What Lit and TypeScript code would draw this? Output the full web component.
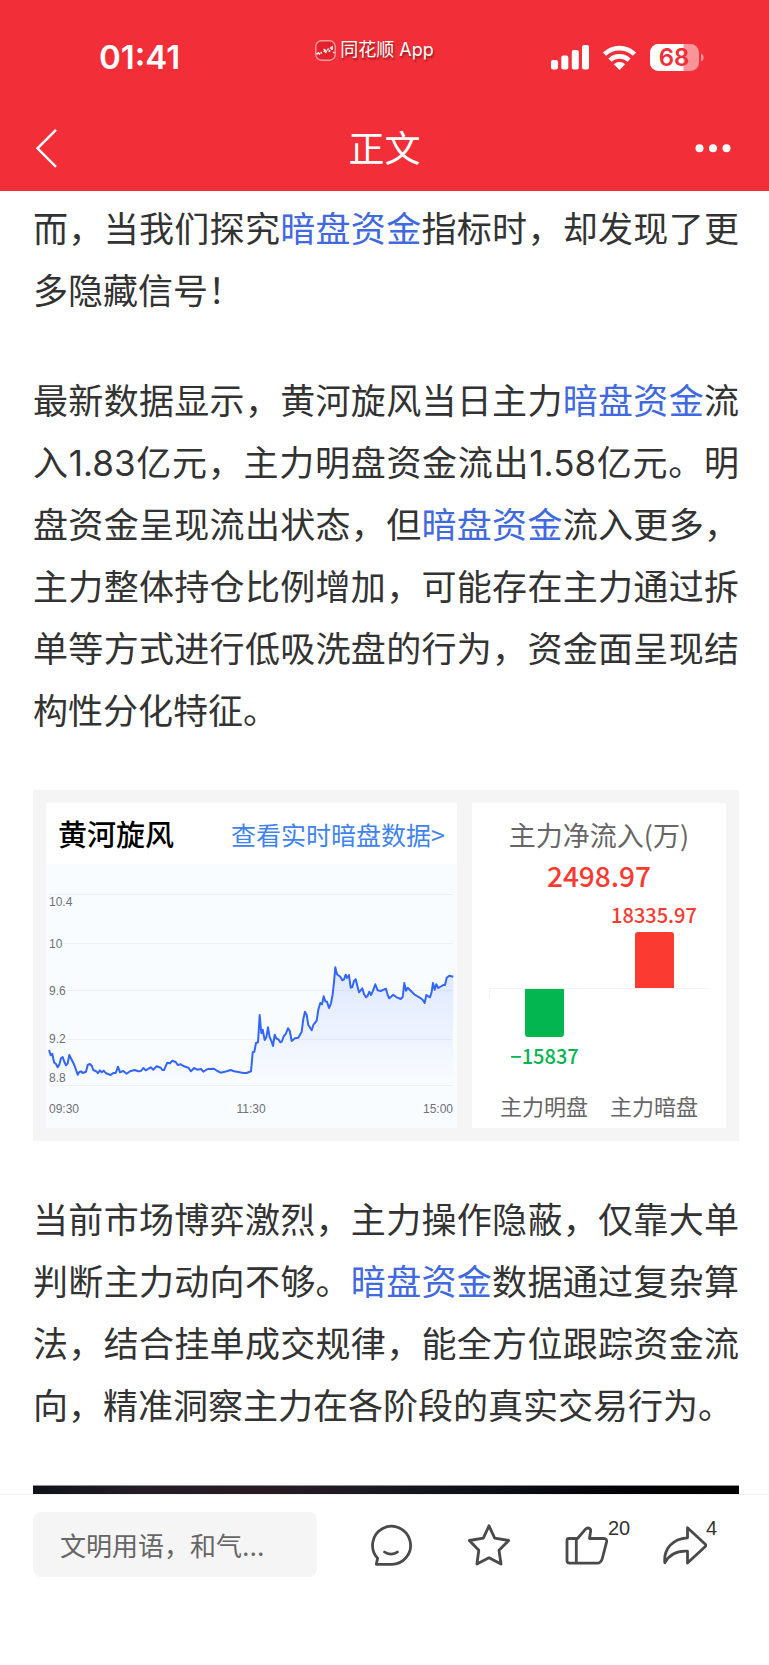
import { LitElement, html, svg, css } from "lit";
import { customElement } from "lit/decorators.js";

/* Intraday price trace, in thirds of a pixel from the plot's top-left corner. */
const TRACE: [number, number][] = [
  [9,558],[14,574],[19,569],[24,595],[30,600],[35,610],[40,602],[45,583],[50,579],[55,593],[60,604],[65,598],[70,573],
  [80,593],[85,603],[95,632],[100,624],[105,622],[110,627],[120,623],[125,603],[132,600],[137,605],[142,618],[152,623],
  [156,628],[162,619],[167,625],[173,620],[180,628],[194,633],[202,627],[209,627],[216,608],[222,625],[232,621],[242,629],
  [252,622],[266,618],[277,622],[285,621],[292,612],[299,619],[314,610],[322,617],[332,607],[344,611],[349,618],[354,618],
  [364,596],[372,598],[379,590],[389,594],[395,603],[404,601],[414,607],[427,611],[435,622],[444,612],[454,617],[465,615],
  [472,623],[485,615],[504,614],[514,621],[524,626],[542,622],[554,618],[564,622],[577,624],[592,627],[602,627],[615,622],
  [620,565],[625,563],[630,537],[636,535],[641,453],[646,507],[650,497],[656,528],[661,520],[666,490],[671,520],[676,530],
  [681,546],[686,512],[691,523],[698,527],[703,535],[708,532],[713,517],[719,510],[726,493],[731,500],[737,531],[747,523],
  [757,521],[767,503],[772,465],[777,443],[782,453],[787,483],[797,499],[802,483],[812,470],[817,437],[823,417],[828,421],
  [833,397],[838,412],[843,413],[849,432],[855,418],[860,390],[864,355],[868,310],[873,331],[883,338],[889,349],[894,346],
  [899,332],[903,342],[909,333],[914,371],[919,369],[924,351],[929,346],[934,365],[939,385],[949,373],[954,390],[960,400],
  [965,395],[970,383],[975,393],[980,382],[988,361],[995,379],[1004,381],[1020,374],[1025,393],[1030,403],[1042,392],
  [1052,400],[1064,405],[1070,399],[1075,357],[1080,380],[1085,371],[1105,391],[1120,400],[1130,407],[1136,417],[1141,393],
  [1152,400],[1157,383],[1161,357],[1166,377],[1171,361],[1177,372],[1192,363],[1197,363],[1202,341],[1210,335],[1222,338],
];

const LINE = "M" + TRACE.map(([x, y]) => `${(x / 3).toFixed(1)} ${(y / 3).toFixed(1)}`).join("L");
const AREA = `${LINE}L407 221L3 221Z`;

const GRID = [30, 79, 126, 175, 221];
const LEVELS = [
  { text: "10.4", y: 42 },
  { text: "10", y: 84 },
  { text: "9.6", y: 131 },
  { text: "9.2", y: 179 },
  { text: "8.8", y: 218 },
];

const FLOWS = [
  { name: "主力明盘", value: -15837, text: "−15837" },
  { name: "主力暗盘", value: 18335.97, text: "18335.97" },
];
const PX_PER_UNIT = 56 / 18335.97;

@customElement("status-bar")
class StatusBar extends LitElement {
  static styles = css`
    :host {
      display: grid;
      grid-template-columns: 4fr auto 5fr;
      height: 107px;
      padding: 0 65px 0 99px;
      color: #fff;
      line-height: 1;
    }
    .time { padding-top: 41px; font-size: 33px; font-weight: 600; }
    .app {
      display: flex;
      align-items: center;
      gap: 4px;
      height: 24px;
      padding-top: 38px;
      font-size: 18px;
      white-space: nowrap;
      text-shadow: 1px 2px 2px rgba(80, 0, 0, 0.55);
    }
    .icons { display: flex; justify-content: flex-end; align-items: center; gap: 14px; height: 28px; padding-top: 43px; }
    svg { display: block; flex: none; }
    .battery { font: 600 24px Inter, sans-serif; }
  `;
  render() {
    return html`
      <span class="time">01:41</span>
      <span class="app">
        <svg width="21" height="21" viewBox="0 0 21 21" aria-hidden="true">
          <rect x=".8" y=".8" width="19.4" height="19.4" rx="5.5" fill="#e5222b" stroke="#ff9a9e" stroke-width="1.4" />
          <path d="M1.5 14l2-1 1.5 1.500M5.500 13l1.500-.5M8.500 9l1.500 1-1 2M10.500 13l1-2.500M12.500 10.500l1-2M14 12l1-2M15 8.500l2-1.500v3M18 12l1.500 1" fill="none" stroke="#fff" stroke-width="1.5" />
        </svg>
        同花顺 App
      </span>
      <span class="icons">
        <svg width="38" height="25" viewBox="0 0 38 25" fill="#fff" role="img" aria-label="信号">
          <rect x="0" y="15" width="7" height="9.500" rx="2" />
          <rect x="10.300" y="10.500" width="7" height="14" rx="2" />
          <rect x="20.800" y="5" width="7" height="19.500" rx="2" />
          <rect x="31" y="0" width="7" height="24.500" rx="2" />
        </svg>
        <svg width="33" height="25" viewBox="0 0 33 25" role="img" aria-label="无线网络">
          <g fill="none" stroke="#fff" stroke-width="4.600">
            <path d="M1.500 9.200a21.500 21.500 0 0 1 30 0" />
            <path d="M7 15.200a13.800 13.800 0 0 1 19 0" />
          </g>
          <path d="M10.800 19.200a8.500 8.500 0 0 1 11.400 0L16.500 25z" fill="#fff" />
        </svg>
        <svg class="battery" width="54" height="27" viewBox="0 0 54 27" role="img" aria-label="电量">
          <rect width="49" height="27" rx="8.500" fill="#f99599" />
          <path d="M8.500 0H33.500V27H8.500A8.500 8.500 0 0 1 0 18.500V8.500A8.500 8.500 0 0 1 8.500 0z" fill="#fff" />
          <path d="M51 9.500c3.500 1.200 3.500 6.800 0 8z" fill="#f99599" />
          <text x="24" y="22" text-anchor="middle" fill="#f22f38">68</text>
        </svg>
      </span>
    `;
  }
}

@customElement("price-chart")
class PriceChart extends LitElement {
  static styles = css`
    :host { display: block; background: #fff; }
    .head { display: flex; align-items: center; justify-content: space-between; height: 61px; padding: 0 12px; box-sizing: border-box; }
    h2 { margin: 0; font-size: 29px; font-weight: 500; line-height: 61px; color: #000; }
    a { font-size: 25px; line-height: 60px; color: #3f83f1; text-decoration: none; }
    svg { display: block; width: 100%; height: auto; background: #f9fcff; }
    text { font: 12px "Liberation Sans", sans-serif; fill: #6e7079; }
    .level { stroke: #f9fcff; stroke-width: 4px; paint-order: stroke; }
  `;
  render() {
    return html`
      <div class="head">
        <h2>黄河旋风</h2>
        <a href="#realtime">查看实时暗盘数据&gt;</a>
      </div>
      <svg viewBox="0 0 411 264" role="img" aria-label="分时走势">
        <defs>
          <linearGradient id="fade" gradientUnits="userSpaceOnUse" x1="0" y1="103" x2="0" y2="221">
            <stop offset="0" stop-color="#3366ff" stop-opacity=".14" />
            <stop offset="1" stop-color="#3366ff" stop-opacity="0" />
          </linearGradient>
        </defs>
        ${GRID.map((y) => svg`<path d=${`M3 ${y + 0.5}H407`} stroke="#edf0f3" />`)}
        ${LEVELS.map((l) => svg`<text class="level" x="3" y=${l.y}>${l.text}</text>`)}
        <path d=${AREA} fill="url(#fade)" />
        <path d=${LINE} fill="none" stroke="#3366ff" stroke-width="2" stroke-linejoin="round" />
        <text x="3" y="249">09:30</text>
        <text x="205" y="249" text-anchor="middle">11:30</text>
        <text x="407" y="249" text-anchor="end">15:00</text>
      </svg>
    `;
  }
}

@customElement("flow-chart")
class FlowChart extends LitElement {
  static styles = css`
    :host { display: flex; flex-direction: column; padding: 14px 17px 0; background: #fff; text-align: center; }
    h2 { margin: 0 0 2px; font-size: 27px; font-weight: 400; line-height: 36px; color: #666; white-space: nowrap; }
    .total { font-size: 28px; font-weight: 500; line-height: 40px; color: #fb3b32; }
    .bars { display: grid; grid-template-columns: 1fr 1fr; }
    .above, .below { display: flex; flex-direction: column; align-items: center; gap: 5px; box-sizing: border-box; }
    .above { justify-content: flex-end; height: 93px; }
    .below { height: 102px; border-top: 1px solid #f2f3f5; }
    .below:nth-child(3) { border-left: 1px solid #f2f3f5; border-image: linear-gradient(#f2f3f5 10px, transparent 10px) 1; }
    .bar { width: 39px; }
    .up { color: #fb3b32; }
    .down { color: #03b650; }
    .up .bar { background: #fb3b32; border-radius: 3px 3px 0 0; }
    .down .bar { background: #03b650; border-radius: 0 0 3px 3px; }
    .value { font-size: 20px; font-weight: 500; line-height: 24px; }
    .down .value { line-height: 28px; }
    .name { font-size: 22px; line-height: 30px; color: #666; white-space: nowrap; }
  `;
  render() {
    return html`
      <h2>主力净流入(万)</h2>
      <div class="total">2498.97</div>
      <div class="bars">
        ${FLOWS.map((f) => html`<div class="above up">${f.value > 0
          ? html`<span class="value">${f.text}</span><span class="bar" style="height:${Math.round(f.value * PX_PER_UNIT)}px"></span>`
          : ""}</div>`)}
        ${FLOWS.map((f) => html`<div class="below down">${f.value < 0
          ? html`<span class="bar" style="height:${Math.round(-f.value * PX_PER_UNIT)}px"></span><span class="value">${f.text}</span>`
          : ""}</div>`)}
        ${FLOWS.map((f) => html`<span class="name">${f.name}</span>`)}
      </div>
    `;
  }
}

@customElement("app-root")
class AppRoot extends LitElement {
  static styles = css`
    :host {
      display: flex;
      flex-direction: column;
      height: 100vh;
      background: #fff;
      color: #333;
      font-family: Inter, "Noto Sans CJK SC", sans-serif;
    }
    button { padding: 0; border: 0; background: none; font: inherit; color: inherit; cursor: pointer; }
    svg { display: block; }
    header { flex: none; background: #f22f38; color: #fff; }
    nav { display: grid; grid-template-columns: 1fr auto 1fr; align-items: center; height: 84px; padding: 0 36px; box-sizing: border-box; }
    h1 { margin: 0; font-size: 36px; font-weight: 400; line-height: 84px; }
    .back { justify-self: start; }
    .more { justify-self: end; }
    main {
      flex: 1;
      min-height: 0;
      overflow: hidden auto;
      scrollbar-width: none;
      padding: 7px 30px 0 33px;
    }
    p { margin: 0 0 48px; font-size: 35px; line-height: 62px; text-align: justify; }
    p a { color: #4169e1; text-decoration: none; }
    .card {
      display: grid;
      grid-template-columns: 411fr 254fr;
      gap: 15px;
      margin-bottom: 48px;
      padding: 13px;
      background: #f5f5f5;
      font-family: "Noto Sans CJK SC", sans-serif;
    }
    .poster {
      height: 320px;
      border-top: 1px solid #8f9094;
      background: linear-gradient(90deg, #101218 0%, #221e24 15%, #2a1a22 32%, #1b1b20 46%, #111218 60%, #020204 85%, #000 100%);
    }
    footer {
      flex: none;
      display: flex;
      align-items: flex-start;
      gap: 25px;
      padding: 17px 35px 88px 33px;
      border-top: 1px solid #f0f0f0;
      background: #fff;
    }
    input {
      box-sizing: border-box;
      width: 284px;
      height: 65px;
      padding: 3px 27px 0;
      border: 0;
      border-radius: 8px;
      background: #f5f5f5;
      font: 26px Inter, "Noto Sans CJK SC", sans-serif;
      color: #333;
    }
    input::placeholder { color: #666; opacity: 1; }
    .actions { flex: 1; display: grid; grid-template-columns: repeat(4, 1fr); justify-items: center; }
    .action { position: relative; height: 65px; color: #4a4a4a; }
    .action svg { fill: none; stroke: currentColor; stroke-width: 2.8; stroke-linejoin: round; stroke-linecap: round; }
    .count { position: absolute; left: 43px; top: 4px; font: 20px/24px "Liberation Sans", sans-serif; color: #333; }
  `;
  render() {
    const term = html`<a href="#dark-pool">暗盘资金</a>`;
    return html`
      <header>
        <status-bar></status-bar>
        <nav>
          <button class="back" aria-label="返回">
            <svg width="21" height="40" viewBox="0 0 21 40" fill="none" stroke="#fff" stroke-width="2.400"><path d="M20 .8L1.500 19.300 20 37.800" /></svg>
          </button>
          <h1>正文</h1>
          <button class="more" aria-label="更多">
            <svg width="38" height="10" viewBox="0 0 38 10" fill="#fff"><circle cx="4.500" cy="4.200" r="4" /><circle cx="18" cy="4.200" r="4" /><circle cx="31.500" cy="4.200" r="4" /></svg>
          </button>
        </nav>
      </header>
      <main>
        <p>而，当我们探究${term}指标时，却发现了更多隐藏信号！</p>
        <p>最新数据显示，黄河旋风当日主力${term}流入1.83亿元，主力明盘资金流出1.58亿元。明盘资金呈现流出状态，但${term}流入更多，主力整体持仓比例增加，可能存在主力通过拆单等方式进行低吸洗盘的行为，资金面呈现结构性分化特征。</p>
        <section class="card">
          <price-chart></price-chart>
          <flow-chart></flow-chart>
        </section>
        <p>当前市场博弈激烈，主力操作隐蔽，仅靠大单判断主力动向不够。${term}数据通过复杂算法，结合挂单成交规律，能全方位跟踪资金流向，精准洞察主力在各阶段的真实交易行为。</p>
        <div class="poster"></div>
      </main>
      <footer>
        <input type="text" aria-label="评论" placeholder="文明用语，和气…" />
        <div class="actions">
          <button class="action" aria-label="查看评论">
            <svg width="44" height="44" viewBox="0 0 44 44">
              <path d="M22 41.300H7.300L8.600 35.200A19 19 0 1 1 22 41.300z" />
              <path d="M15.500 29c3.500 2.800 9.500 2.800 13 0" />
            </svg>
          </button>
          <button class="action" aria-label="收藏">
            <svg width="44" height="44" viewBox="0 0 44 44">
              <path d="M22 2.800L27.700 15.200 41.700 17.500 32 27.300 34 41 22 34.800 9.900 41 11.800 27.300 2.300 17.500 16.300 15.200z" />
            </svg>
          </button>
          <button class="action" aria-label="点赞">
            <svg width="44" height="44" viewBox="0 0 44 44">
              <path d="M4 15.500H12.500L20.500 6.200C22.500 4 26 5 25.600 8.200L24.500 15.500H39C41 15.500 42 17 41.600 18.800L37.300 35.500C36.500 38.500 35 40.200 32 40.200H4.500C3 40.200 2 39.200 2 37.700V17.500C2 16.300 2.800 15.500 4 15.500zM11.300 15.500V40.200" />
            </svg>
            <span class="count">20</span>
          </button>
          <button class="action" aria-label="分享">
            <svg width="44" height="44" viewBox="0 0 44 44">
              <path d="M24.500 4.700L42.300 21.300C43 22 43 22.800 42.300 23.500L24.500 40V28.200C14 27.500 7 30.500 1.800 39.700 0.500 26 9.500 15.600 24.500 14.800z" />
            </svg>
            <span class="count">4</span>
          </button>
        </div>
      </footer>
    `;
  }
}
